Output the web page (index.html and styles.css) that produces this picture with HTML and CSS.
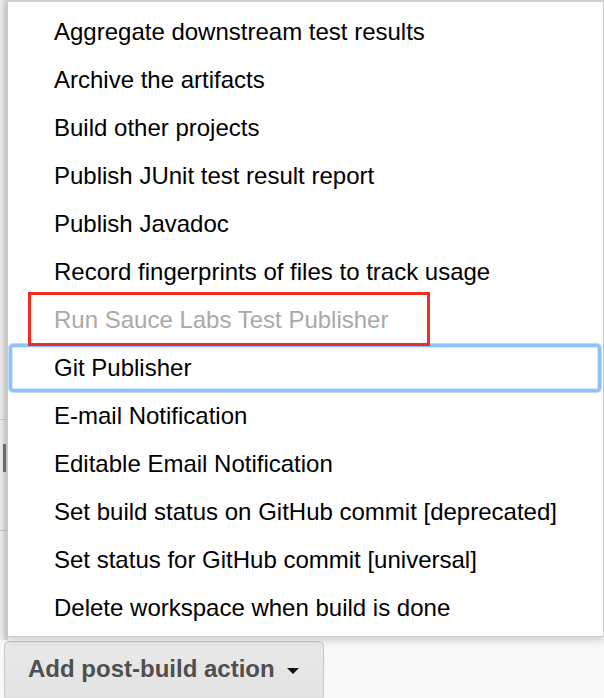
FILE: index.html
```html
<!DOCTYPE html>
<html>
<head>
<meta charset="utf-8">
<link rel="stylesheet" href="styles.css">
</head>
<body>
<div class="page">
  <div class="behind">
    <div class="strip"></div>
    <div class="line line-a"></div>
    <div class="mark"></div>
    <div class="line line-b"></div>
  </div>
  <div class="menu">
    <div class="item">Aggregate downstream test results</div>
    <div class="item">Archive the artifacts</div>
    <div class="item">Build other projects</div>
    <div class="item">Publish JUnit test result report</div>
    <div class="item">Publish Javadoc</div>
    <div class="item">Record fingerprints of files to track usage</div>
    <div class="item disabled"><span class="callout"></span>Run Sauce Labs Test Publisher</div>
    <div class="item focused">Git Publisher</div>
    <div class="item">E-mail Notification</div>
    <div class="item">Editable Email Notification</div>
    <div class="item">Set build status on GitHub commit [deprecated]</div>
    <div class="item">Set status for GitHub commit [universal]</div>
    <div class="item">Delete workspace when build is done</div>
  </div>
  <button class="add-btn">Add post-build action <span class="caret"></span></button>
</div>
</body>
</html>
```

FILE: styles.css
```css
html, body {
  margin: 0;
  padding: 0;
}
body {
  background: #f8f8f8;
  font-family: "Liberation Sans", Arial, Helvetica, sans-serif;
  width: 604px;
  height: 698px;
  overflow: hidden;
}
.page {
  position: relative;
  display: flex;
  flex-direction: column;
  align-items: flex-start;
}
.behind {
  position: absolute;
  left: 0;
  top: 0;
  width: 8px;
  height: 640px;
}
.strip {
  position: absolute;
  left: 0;
  top: 0;
  width: 8px;
  height: 640px;
  background: linear-gradient(to right, #ececec 0, #e6e6e6 3px, #d9d9d9 4px, #d6d6d6 7px);
}
.line {
  position: absolute;
  left: 0;
  width: 8px;
  height: 1px;
  background: #c4c4c4;
}
.line-a { top: 419px; }
.line-b { top: 530px; }
.mark {
  position: absolute;
  left: 3px;
  top: 444px;
  width: 3px;
  height: 28px;
  background: #6e6e6e;
}
.menu {
  position: relative;
  margin-left: 7px;
  width: 595px;
  background: #fff;
  border: 1px solid #c9c9c9;
  border-top: 2px solid #d0d0d0;
  padding: 6px 0 4px 0;
  box-shadow: 0 3px 8px rgba(0, 0, 0, 0.18);
  display: flex;
  flex-direction: column;
  z-index: 1;
}
.item {
  position: relative;
  height: 48px;
  line-height: 48px;
  padding-left: 46px;
  font-size: 24px;
  color: #000;
  white-space: nowrap;
  box-sizing: border-box;
}
.item.disabled {
  color: #a9a9a9;
}
.callout {
  position: absolute;
  z-index: 2;
  left: 20px;
  top: -4px;
  width: 396px;
  height: 48px;
  border: 3px solid #f22b22;
  pointer-events: none;
}
.item.focused {
  margin: 0 2px 0 1px;
  padding-left: 42px;
  border: 3px solid #8fc2fb;
  border-radius: 4px;
  line-height: 42px;
  box-shadow: 0 0 0 1px #bcdafc, inset 0 0 0 1px #d6e8fd;
}
.add-btn {
  margin: 4px 0 0 4px;
  height: 60px;
  width: 320px;
  padding: 0 0 4px 23px;
  text-align: left;
  font-family: "Liberation Sans", Arial, Helvetica, sans-serif;
  font-size: 24px;
  font-weight: bold;
  color: #4f4f4f;
  background: linear-gradient(#e9e9e9, #e2e2e2);
  border: 1px solid #c6c6c6;
  border-radius: 5px;
  display: flex;
  align-items: center;
}
.caret {
  display: inline-block;
  margin-left: 12px;
  width: 0;
  height: 0;
  border-left: 6px solid transparent;
  border-right: 6px solid transparent;
  border-top: 6px solid #111;
  margin-top: 3px;
}
```
